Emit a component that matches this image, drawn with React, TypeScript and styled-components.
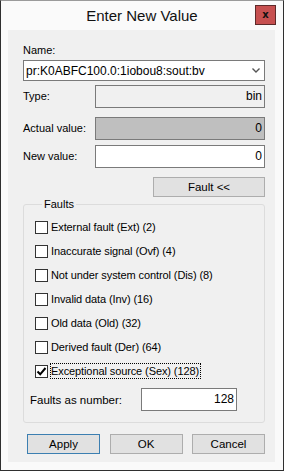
import { createGlobalStyle } from "styled-components";
import styled from "styled-components";

const GlobalStyle = createGlobalStyle`
    html, body {
        margin: 0;
        padding: 0;
        background: #ffffff;
    }
    body {
        font-family: "Liberation Sans", Arial, sans-serif;
        font-size: 11px;
        color: #000;
    }
`

const Window = styled.div`
    width: 284px;
    height: 471px;
    box-sizing: border-box;
    border: 1px solid #2f2f2f;
    border-top-color: #9a9a9a;
    background: #fafafa;
    display: flex;
    flex-direction: column;
`

const TitleBar = styled.div`
    height: 29px;
    display: flex;
    align-items: center;
    justify-content: center;
    position: relative;
    font-size: 15px;
    color: #111;
`

const CloseButton = styled.div`
    position: absolute;
    right: 7px;
    top: 4px;
    width: 19px;
    height: 18px;
    background: #c75050;
    border: 1px solid #5e2a2a;
    display: flex;
    align-items: center;
    justify-content: center;
    font-family: "DejaVu Sans", sans-serif;
    font-weight: bold;
    font-size: 10px;
    line-height: 1;
`

const Panel = styled.div`
    margin: 0 7px 0 7px;
    width: 267px;
    height: 432px;
    background: #f0f0f0;
    box-sizing: border-box;
    padding: 14px 10px 0 15px;
    display: flex;
    flex-direction: column;
`

const Label = styled.div`
    height: 13px;
    line-height: 13px;
    white-space: nowrap;
`

const Select = styled.div`
    margin-top: 3px;
    height: 21px;
    box-sizing: border-box;
    border: 1px solid #7a7a7a;
    background: #fff;
    display: flex;
    align-items: center;
    justify-content: space-between;
    padding: 0 4px 0 2px;
    font-size: 12px;
`

const Row = styled.div<{ $top: number }>`
    margin-top: ${(p) => p.$top}px;
    display: flex;
    align-items: center;
    height: 23px;
`

const RowLabel = styled(Label)`
    width: 72px;
`

const ValueBox = styled.div<{ $bg: string }>`
    flex: 1;
    height: 23px;
    box-sizing: border-box;
    border: 1px solid #7a7a7a;
    background: ${(p) => p.$bg};
    text-align: right;
    padding: 0 2px;
    line-height: 20px;
    font-size: 12px;
`

const ButtonBar = styled.div<{ $top: number }>`
    margin-top: ${(p) => p.$top}px;
    display: flex;
    justify-content: flex-end;
`

const PushButton = styled.div<{ $w: number; $focused?: boolean }>`
    width: ${(p) => p.$w}px;
    height: 20px;
    box-sizing: border-box;
    border: 1px solid ${(p) => (p.$focused ? "#3c7fb1" : "#adadad")};
    background: #e1e1e1;
    display: flex;
    align-items: center;
    justify-content: center;
    font-size: 11.5px;
`

const Group = styled.fieldset`
    margin: 1px 0 0 0;
    padding: 4px 0 11px 11px;
    border: 1px solid #dcdcdc;
    border-radius: 3px;
    display: flex;
    flex-direction: column;
    min-width: 0;
`

const Legend = styled.legend`
    margin-left: 7px;
    padding: 0 2px;
    height: 13px;
    line-height: 13px;
`

const CheckRow = styled.div`
    height: 24px;
    display: flex;
    align-items: center;
    gap: 3px;
`

const Box = styled.div`
    width: 13px;
    height: 13px;
    box-sizing: border-box;
    border: 1px solid #333;
    background: #fff;
    display: flex;
    align-items: center;
    justify-content: center;
`

const CheckText = styled.span<{ $focus?: boolean }>`
    outline: ${(p) => (p.$focus ? "1px dotted #000" : "none")};
    padding: 0 1px 0 0;
    line-height: 14px;
    font-size: 11px;
    letter-spacing: -0.1px;
`

const NumberRow = styled.div`
    margin-top: 5px;
    display: flex;
    align-items: center;
    height: 23px;
    margin-left: -5px;
    font-size: 11.5px;
`

const NumberLabel = styled.div`
    width: 111px;
`

const NumberInput = styled.div`
    width: 96px;
    height: 23px;
    box-sizing: border-box;
    border: 1px solid #7a7a7a;
    background: #fff;
    text-align: right;
    padding: 0 2px;
    line-height: 20px;
    font-size: 12px;
`

const Footer = styled.div`
    margin-top: 11px;
    margin-left: 4px;
    display: flex;
    justify-content: space-between;
`

const faults = [
    "External fault (Ext) (2)",
    "Inaccurate signal (Ovf) (4)",
    "Not under system control (Dis) (8)",
    "Invalid data (Inv) (16)",
    "Old data (Old) (32)",
    "Derived fault (Der) (64)",
    "Exceptional source (Sex) (128)",
]

function Chevron() {
    return (
        <svg width="8" height="5" viewBox="0 0 8 5">
            <path d="M0.5 0.5 L4 4 L7.5 0.5" stroke="#555" strokeWidth="1.4" fill="none" />
        </svg>
    )
}

function Tick() {
    return (
        <svg width="11" height="11" viewBox="0 0 11 11">
            <path d="M1.5 5.5 L4.2 8.3 L9.5 2" stroke="#000" strokeWidth="2" fill="none" />
        </svg>
    )
}

export default function App() {
    const value = 128
    return (
        <>
            <GlobalStyle />
            <Window>
                <TitleBar>
                    Enter New Value
                    <CloseButton>x</CloseButton>
                </TitleBar>
                <Panel>
                    <Label>Name:</Label>
                    <Select>
                        <span>pr:K0ABFC100.0:1iobou8:sout:bv</span>
                        <Chevron />
                    </Select>
                    <Row $top={4}>
                        <RowLabel>Type:</RowLabel>
                        <ValueBox $bg="#f0f0f0">bin</ValueBox>
                    </Row>
                    <Row $top={9}>
                        <RowLabel>Actual value:</RowLabel>
                        <ValueBox $bg="#bfbfbf">0</ValueBox>
                    </Row>
                    <Row $top={5}>
                        <RowLabel>New value:</RowLabel>
                        <ValueBox $bg="#ffffff">0</ValueBox>
                    </Row>
                    <ButtonBar $top={9}>
                        <PushButton $w={112}>Fault &lt;&lt;</PushButton>
                    </ButtonBar>
                    <Group>
                        <Legend>Faults</Legend>
                        {faults.map((f, i) => {
                            const checked = (value & (2 << i)) !== 0
                            return (
                                <CheckRow key={f}>
                                    <Box>{checked && <Tick />}</Box>
                                    <CheckText $focus={checked}>{f}</CheckText>
                                </CheckRow>
                            )
                        })}
                        <NumberRow>
                            <NumberLabel>Faults as number:</NumberLabel>
                            <NumberInput>{value}</NumberInput>
                        </NumberRow>
                    </Group>
                    <Footer>
                        <PushButton $w={73} $focused>Apply</PushButton>
                        <PushButton $w={73}>OK</PushButton>
                        <PushButton $w={73}>Cancel</PushButton>
                    </Footer>
                </Panel>
            </Window>
        </>
    )
}
